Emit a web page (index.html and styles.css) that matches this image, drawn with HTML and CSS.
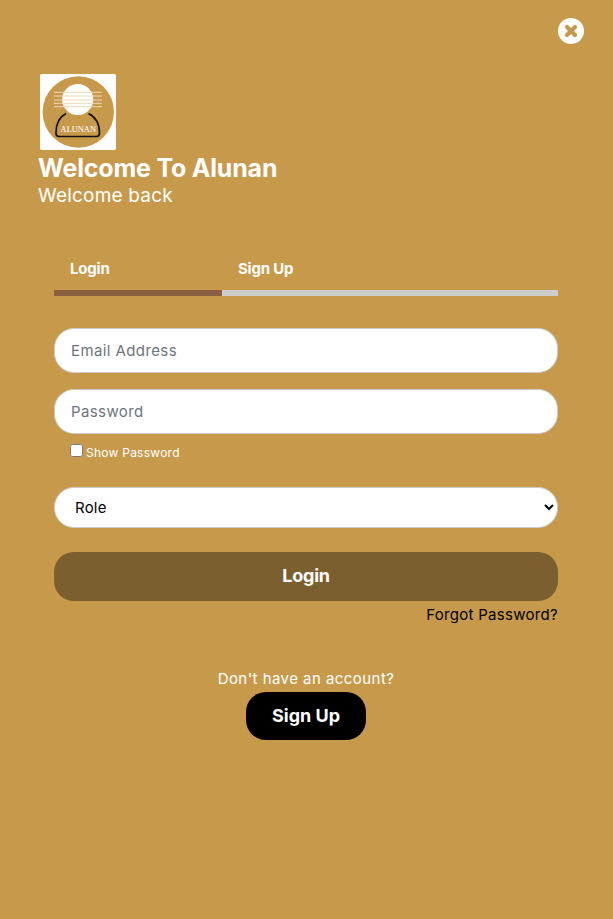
FILE: index.html
```html
<!DOCTYPE html>
<html lang="en">
<head>
<meta charset="utf-8">
<title>Welcome To Alunan</title>
<link rel="stylesheet" href="styles.css">
</head>
<body>
<div class="page">
  <div class="close-row">
    <button class="close" aria-label="Close">
      <svg viewBox="0 0 26 26" width="26" height="26"><circle cx="13" cy="13" r="13" fill="#fff"/><path d="M9 9l8 8M17 9l-8 8" stroke="#c79a4b" stroke-width="4.2" stroke-linecap="round"/></svg>
    </button>
  </div>
  <header class="brand">
    <div class="logo">
      <svg viewBox="0 0 76 76" width="76" height="76">
        <rect width="76" height="76" rx="2" fill="#fff"/>
        <circle cx="38.300" cy="38" r="35.700" fill="#c79a4b"/>
        <circle cx="37.700" cy="25.500" r="15.500" fill="#fff"/>
        <path d="M14 18.300h48M14 22h48M14 26h48M14 29.300h48M14 32.700h48" stroke="#ead9b8" stroke-width="1"/>
        <path d="M26 39.500C19 43 16 50 16 59q0 3.500 3 3.500h37.500q3 0 3-3.500C59.500 50 55.500 43 48.500 39.500" fill="none" stroke="#111" stroke-width="1.700"/>
        <text x="38.300" y="57.500" class="logo-text" text-anchor="middle">ALUNAN</text>
      </svg>
    </div>
    <h1 class="title">Welcome To Alunan</h1>
    <p class="subtitle">Welcome back</p>
  </header>
  <main class="panel">
    <nav class="tabs">
      <a class="tab tab-active">Login</a>
      <a class="tab tab-rest">Sign Up</a>
    </nav>
    <form class="form">
      <input class="field" type="text" placeholder="Email Address">
      <input class="field field-password" type="password" placeholder="Password">
      <label class="show"><input class="check" type="checkbox"><span>Show Password</span></label>
      <select class="role"><option>Role</option></select>
      <button class="submit" type="button">Login</button>
      <a class="forgot">Forgot Password?</a>
    </form>
    <div class="signup">
      <p class="signup-text">Don't have an account?</p>
      <button class="signup-btn" type="button">Sign Up</button>
    </div>
  </main>
</div>
</body>
</html>
```

FILE: styles.css
```css
* { box-sizing: border-box; }
html, body { margin: 0; height: 100%; }
body { background: #c79a4b; font-family: "Inter", "Liberation Sans", sans-serif; color: #fff; overflow: hidden; }
.page { display: flex; flex-direction: column; height: 919px; }
.close-row { display: flex; justify-content: flex-end; padding: 18px 29px 0 0; height: 74px; }
.close { width: 26px; height: 26px; padding: 0; border: 0; background: none; display: block; }
.close svg { display: block; }
.brand { padding-left: 38px; }
.logo { margin-left: 2px; width: 76px; height: 76px; }
.logo svg { display: block; }
.logo-text { font-family: "Liberation Serif", serif; font-size: 8.400px; fill: #fff; }
.title { margin: 2px 0 0; font-size: 25px; line-height: 32px; font-weight: 700; letter-spacing: -0.2px; }
.subtitle { margin: 1px 0 0; font-size: 19px; line-height: 22px; font-weight: 400; letter-spacing: 0.2px; }
.panel { padding: 51px 55px 0 54px; }
.tabs { display: flex; height: 38px; }
.tab { display: block; font-size: 15px; font-weight: 700; line-height: 22px; padding: 0 0 0 16px; letter-spacing: -0.2px; }
.tab-active { width: 168px; border-bottom: 6px solid #8a5e42; }
.tab-rest { flex: 1; border-bottom: 6px solid #cdcdcd; }
.form { display: flex; flex-direction: column; margin-top: 32px; }
.field { height: 45px; width: 100%; border: 1px solid #ccc; border-radius: 20px; background: #fff; padding: 0 16px; font: 400 15px "Inter", sans-serif; letter-spacing: 0.4px; color: #333; outline: 0; }
.field::placeholder { color: #6c757d; opacity: 1; }
.field-password { margin-top: 16px; }
.show { display: flex; align-items: flex-start; margin: 10px 0 0 16px; height: 20px; font-size: 12px; line-height: 18px; letter-spacing: 0.25px; }
.check { width: 13px; height: 13px; margin: 0 3px 0 0; }
.role { margin-top: 23px; height: 41px; width: 100%; border: 1px solid #ccc; border-radius: 20px; background: #fff; padding: 0 16px; font: 400 15px "Inter", sans-serif; letter-spacing: 0.2px; color: #000; }
.submit { margin-top: 24px; height: 49px; padding: 0 0 2px; border: 0; border-radius: 20px; background: #7c5f2e; color: #fff; font: 700 18px "Inter", sans-serif; letter-spacing: -0.2px; }
.forgot { margin-top: 4px; align-self: flex-end; font-size: 15px; line-height: 20px; letter-spacing: 0.3px; color: #000; }
.signup { margin-top: 43px; display: flex; flex-direction: column; align-items: center; }
.signup-text { margin: 0; font-size: 15px; line-height: 22px; letter-spacing: 0.45px; }
.signup-btn { margin-top: 2px; width: 120px; height: 48px; padding: 0 0 2px; border: 0; border-radius: 20px; background: #000; color: #fff; font: 700 18px "Inter", sans-serif; }
```
